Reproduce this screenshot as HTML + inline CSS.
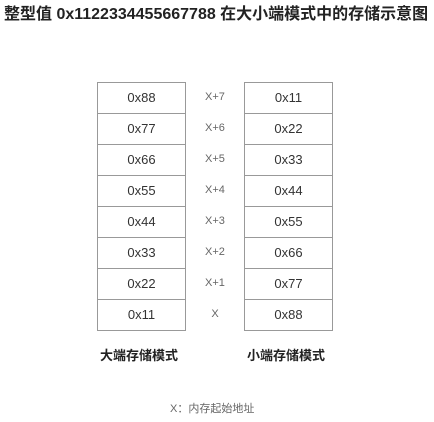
<!DOCTYPE html>
<html><head><meta charset="utf-8"><style>
*{box-sizing:border-box}
body{margin:0;width:434px;height:422px;background:#fff;position:relative;font-family:"Liberation Sans","Noto Sans CJK SC",sans-serif;color:#222;overflow:hidden}
.t{position:absolute;left:4px;top:5px;font-size:16px;font-weight:bold;white-space:nowrap;line-height:20px}
.c{position:absolute;width:89px;height:32px;border:1px solid #999;text-align:center;line-height:30px;font-size:13px;color:#333}
.m{position:absolute;left:190px;width:50px;height:31px;line-height:31px;text-align:center;font-size:11px;color:#666}
.lab{position:absolute;top:347px;font-size:13px;font-weight:bold;line-height:18px}
.f{position:absolute;left:170px;top:401px;font-size:11px;color:#666;line-height:16px}
</style></head><body>
<div class="t">整型值 0x1122334455667788 在大小端模式中的存储示意图</div>
<div class="c" style="left:97px;top:82px">0x88</div>
<div class="c" style="left:97px;top:113px">0x77</div>
<div class="c" style="left:97px;top:144px">0x66</div>
<div class="c" style="left:97px;top:175px">0x55</div>
<div class="c" style="left:97px;top:206px">0x44</div>
<div class="c" style="left:97px;top:237px">0x33</div>
<div class="c" style="left:97px;top:268px">0x22</div>
<div class="c" style="left:97px;top:299px">0x11</div>
<div class="m" style="top:82px">X+7</div>
<div class="m" style="top:113px">X+6</div>
<div class="m" style="top:144px">X+5</div>
<div class="m" style="top:175px">X+4</div>
<div class="m" style="top:206px">X+3</div>
<div class="m" style="top:237px">X+2</div>
<div class="m" style="top:268px">X+1</div>
<div class="m" style="top:299px">X</div>
<div class="c" style="left:244px;top:82px">0x11</div>
<div class="c" style="left:244px;top:113px">0x22</div>
<div class="c" style="left:244px;top:144px">0x33</div>
<div class="c" style="left:244px;top:175px">0x44</div>
<div class="c" style="left:244px;top:206px">0x55</div>
<div class="c" style="left:244px;top:237px">0x66</div>
<div class="c" style="left:244px;top:268px">0x77</div>
<div class="c" style="left:244px;top:299px">0x88</div>
<div class="lab" style="left:100px">大端存储模式</div>
<div class="lab" style="left:247px">小端存储模式</div>
<div class="f">X：内存起始地址</div>
</body></html>
